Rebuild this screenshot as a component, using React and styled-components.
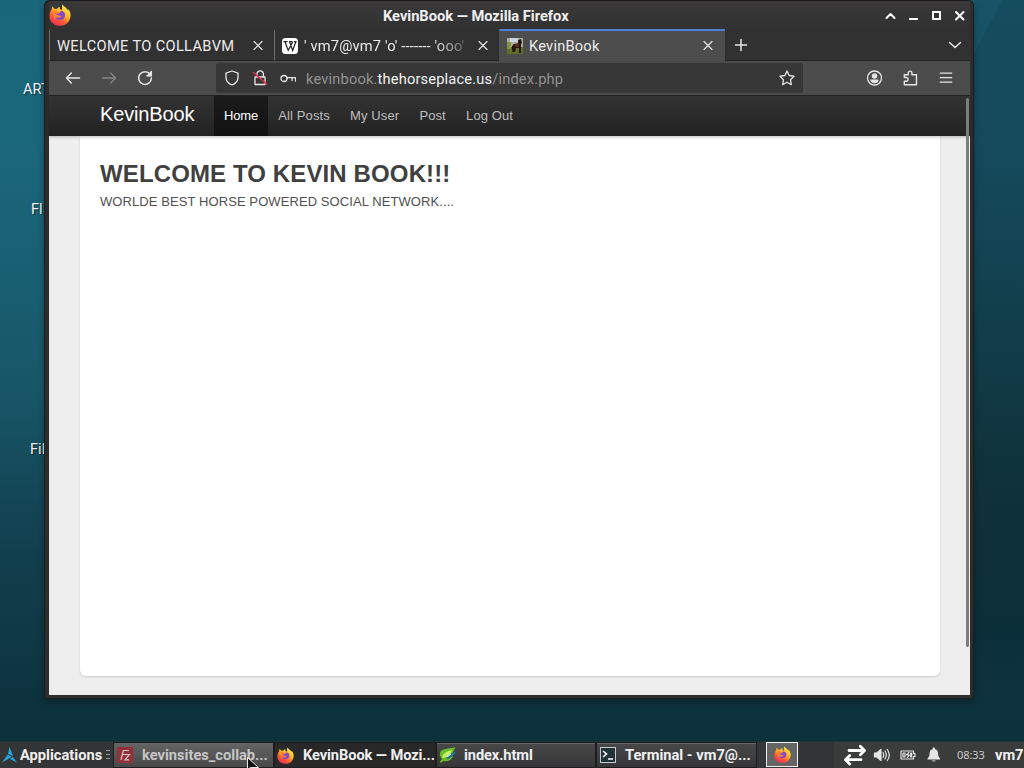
import React from 'react';
import styled, { createGlobalStyle } from 'styled-components';

const GlobalStyle = createGlobalStyle`
  * { box-sizing: border-box; }
  body { margin: 0; overflow: hidden; }
  svg { display: block; flex: none; }
  h1, p { margin: 0; }
`;

const Desktop = styled.div`
  position: relative;
  width: 1024px;
  height: 768px;
  overflow: hidden;
  display: flex;
  flex-direction: column;
  justify-content: flex-end;
  font-family: Roboto, 'Liberation Sans', sans-serif;
  background: linear-gradient(180deg, #19657a 0%, #1b677c 18%, #195e71 38%, #175566 52%, #123f4e 72%, #0d333f 91%, #0a303c 100%);
`;

const DesktopLabel = styled.span`
  position: absolute;
  left: ${(p) => p.$x}px;
  top: ${(p) => p.$y}px;
  font-size: 14.67px;
  line-height: 18px;
  color: #eef4f5;
  white-space: nowrap;
  text-shadow: 1px 1px 1px rgba(0, 0, 0, 0.6);
`;

const LightRay = styled.svg`
  position: absolute;
  right: 0;
  top: 0;
`;

const BrowserWindow = styled.section`
  position: absolute;
  left: 44px;
  top: 0;
  width: 930px;
  height: 699px;
  padding: 1px 4px 4px 5px;
  display: flex;
  flex-direction: column;
  border-radius: 6px 6px 2px 2px;
  background: #2d2d2e;
  box-shadow: inset 0 0 0 1px #1b1c1d, 0 3px 7px rgba(0, 0, 0, 0.3);
`;

const TitleBar = styled.header`
  height: 28px;
  flex: none;
  display: flex;
  align-items: center;
  justify-content: space-between;
  background: linear-gradient(#3a3838, #313131);
`;

const WindowTitle = styled.div`
  flex: 1;
  margin-left: 312px;
  padding-top: 2px;
  font-size: 14.67px;
  font-weight: 700;
  letter-spacing: -0.02px;
  color: #f0f0f0;
  white-space: nowrap;
`;

const WindowButtons = styled.div`
  display: flex;
  margin-right: -1px;
  padding-top: 2px;
`;

const TabStrip = styled.div`
  height: 32px;
  flex: none;
  display: flex;
  background: #313131;
`;

const Tab = styled.div`
  width: ${(p) => p.$w}px;
  display: flex;
  align-items: center;
  padding: 0 ${(p) => (p.$active ? 9 : 8)}px 0 7px;
  border-left: 1px solid ${(p) => (p.$active ? '#4d4d4d' : '#6b6b6b')};
  border-top: 2px solid ${(p) => (p.$active ? '#4f7fd6' : 'transparent')};
  border-bottom: ${(p) => (p.$active ? '0' : '1px solid #222')};
  background: ${(p) => (p.$active ? '#4d4d4d' : '#313131')};
  color: #ececec;
`;

const TabTitle = styled.span`
  flex: 1;
  margin-left: ${(p) => p.$gap || 0}px;
  font-size: 14.67px;
  letter-spacing: ${(p) => p.$ls || 0}px;
  line-height: 20px;
  white-space: nowrap;
  overflow: hidden;
  ${(p) => p.$fade && 'mask-image: linear-gradient(90deg, #000 80%, rgba(0,0,0,.25) 100%); margin-right: 10px;'}
`;

const TabStripTail = styled.div`
  flex: 1;
  display: flex;
  align-items: center;
  justify-content: space-between;
  padding: 1px 7px 0 8px;
  border-bottom: 1px solid #222;
`;

const Toolbar = styled.div`
  height: 35px;
  flex: none;
  display: flex;
  align-items: center;
  background: #4c4c4c;
  border-bottom: 1px solid #222;
`;

const NavButtons = styled.div`
  display: flex;
  gap: 20px;
  width: 167px;
  padding-left: 16px;
`;

const UrlBar = styled.div`
  width: 587px;
  height: 30px;
  display: flex;
  align-items: center;
  padding: 0 8px;
  background: #373737;
  border-radius: 2px;
`;

const UrlIcons = styled.div`
  display: flex;
  gap: 12px;
`;

const Url = styled.div`
  flex: 1;
  margin-left: 10px;
  padding-top: 1px;
  font-size: 14.67px;
  letter-spacing: 0.16px;
  color: #929292;
  white-space: nowrap;
  b { font-weight: 400; color: #f3f3f3; }
`;

const ToolbarActions = styled.div`
  flex: 1;
  display: flex;
  justify-content: flex-end;
  gap: 20px;
  padding-right: 16px;
`;

const Page = styled.main`
  position: relative;
  flex: 1;
  display: flex;
  flex-direction: column;
  background: #eee;
  font-family: 'Liberation Sans', Arial, sans-serif;
`;

const SiteNav = styled.nav`
  position: relative;
  z-index: 1;
  height: 40px;
  display: flex;
  flex: none;
  padding-left: 51px;
  background: linear-gradient(#333, #222);
  box-shadow: 0 1px 3px rgba(0, 0, 0, 0.25);
`;

const Brand = styled.div`
  width: 114px;
  padding-top: 7px;
  font-size: 20px;
  line-height: 23px;
  letter-spacing: -0.15px;
  color: #fff;
`;

const NavLink = styled.div`
  padding: 10px 10px 11px;
  font-size: 13px;
  line-height: 19px;
  letter-spacing: ${(p) => (p.$active ? -0.15 : 0.1)}px;
  color: ${(p) => (p.$active ? '#fff' : '#bfbfbf')};
  background: ${(p) => (p.$active ? 'linear-gradient(#1b1b1b, #111)' : 'none')};
`;

const Links = styled.div`
  display: flex;
  gap: ${(p) => p.$gap || 0}px;
`;

const Content = styled.div`
  width: 860px;
  height: 540px;
  margin-left: 31px;
  padding: 20px;
  background: #fff;
  border-radius: 0 0 6px 6px;
  box-shadow: 0 1px 2px rgba(0, 0, 0, 0.15);
`;

const Heading = styled.h1`
  font-size: 24px;
  line-height: 36px;
  letter-spacing: 0.12px;
  color: #404040;
`;

const Tagline = styled.p`
  font-size: 13px;
  line-height: 18px;
  padding-top: 1px;
  letter-spacing: 0.085px;
  color: #505050;
`;

const ScrollThumb = styled.div`
  position: absolute;
  z-index: 2;
  right: 1px;
  top: 2px;
  width: 3px;
  height: 549px;
  border-radius: 2px;
  background: #7d7d7d;
`;

const Panel = styled.footer`
  height: 27px;
  display: flex;
  align-items: stretch;
  background: #343536;
  border-top: 1px solid #292d2f;
  color: #f0f0f0;
  font-size: 14.67px;
  font-weight: 700;
`;

const AppsMenu = styled.div`
  width: 113px;
  display: flex;
  align-items: center;
  padding-left: 2px;
  gap: 3px;
  white-space: nowrap;
`;

const Grip = styled.i`
  width: 4px;
  height: 10px;
  margin-left: 1px;
  background: repeating-linear-gradient(#9a9a9a 0 1px, transparent 1px 4px);
`;

const Task = styled.div`
  width: ${(p) => p.$w}px;
  display: flex;
  align-items: center;
  gap: ${(p) => p.$gap || 8}px;
  padding-left: ${(p) => p.$pad ?? 3}px;
  border: 1px solid #1d1d1e;
  color: ${(p) => (p.$dim ? '#c6c6c6' : '#f0f0f0')};
  background: ${(p) => (p.$active ? '#282829' : p.$dim ? 'linear-gradient(#646464, #484848)' : 'linear-gradient(#484848, #363638)')};
  box-shadow: ${(p) => (p.$active ? 'none' : 'inset 0 1px 0 #666')};
  white-space: nowrap;
  letter-spacing: ${(p) => p.$ls || 0}px;
  overflow: hidden;
`;

const Launcher = styled.div`
  width: 32px;
  margin: 0 36px 1px 9px;
  display: flex;
  align-items: center;
  justify-content: center;
  border: 1px solid #f2f2f2;
  background: #656565;
`;

const Tray = styled.div`
  flex: 1;
  display: flex;
  align-items: center;
  padding-left: 9px;
  background: #3a3b3b;
  overflow: hidden;
`;

const TrayIcons = styled.div`
  display: flex;
  align-items: center;
  gap: 9px;
  margin-left: 6px;
`;

const Clock = styled.span`
  width: 28px;
  margin: 0 10px 0 16px;
  font: 400 11px/14px 'Noto Sans', 'Open Sans', sans-serif;
  letter-spacing: -0.1px;
  color: #ccc;
`;

const UserName = styled.span`
  white-space: nowrap;
`;

const Pointer = styled.svg`
  position: absolute;
  left: 247px;
  top: 757px;
`;

const FirefoxIcon = ({ size = 20, id }) => (
  <svg width={size} height={size} viewBox="0 0 22 22">
    <defs>
      <linearGradient id={id} x1="0.8" y1="0" x2="0.2" y2="1">
        <stop offset="0" stopColor="#fff04a" />
        <stop offset="0.4" stopColor="#ffb52b" />
        <stop offset="0.7" stopColor="#ff5534" />
        <stop offset="1" stopColor="#ee2866" />
      </linearGradient>
    </defs>
    <path fill={`url(#${id})`} d="M3.2 2.2 5.8 5 8 4.8C9 3.7 9.7 3 10.7 2.7L11 5.1 13 6C13.4 3.4 12.6 2 13.4.5 15 2.9 18.2 3.7 18.6 6.3L19.3 5.2C21.1 7.4 22 10 21.5 12.5 20.7 18.4 16.7 21.7 11.3 21.8 5 21.8.5 17.6.5 11.9.5 9.1 1.4 7.1 2.7 5.4Z" />
    <path fill="#fa8433" d="M4.5 7.4 7.4 6.5 11.3 9.3 8.9 10.5 7.5 12.7 11.2 15.6 6.8 15.8C4.7 14.1 3.5 11.2 4.5 7.4Z" />
    <path fill="#8548c6" d="M11.1 7.1C14.7 6.4 16.8 9.3 15.9 12.4 15.2 15.7 10.8 17 7.6 15.2 6.6 14.6 6.5 13.7 6.6 12.9 8.2 14.4 11.9 14.1 12.5 12.1 9.7 12.1 8.8 10.6 6.9 10.5 8 9 11.8 10.2 11.1 7.1Z" />
  </svg>
);

const Glyph = ({ w = 16, h = 16, color = '#e5e5e5', stroke = 1.3, children, ...rest }) => (
  <svg width={w} height={h} viewBox={`0 0 ${w} ${h}`} fill="none" stroke={color} strokeWidth={stroke} strokeLinecap="round" strokeLinejoin="round" {...rest}>
    {children}
  </svg>
);

const CloseIcon = () => <Glyph stroke={1.15}><path d="m4 3.5 8 8m0-8-8 8" /></Glyph>;

const WikiIcon = () => (
  <svg width="16" height="16" viewBox="0 0 16 16">
    <rect width="16" height="16" rx="3.5" fill="#fff" />
    <path d="M1.5 3.7h4M7 3.7h3.3M12 3.7h2.6M3 3.7l3.2 8.7L10.8 3.7M7.5 3.7l3.2 8.7 3.1-8.7" fill="none" stroke="#222" strokeWidth="1.2" />
  </svg>
);

const HorseIcon = () => (
  <svg width="16" height="16" viewBox="0 0 16 16">
    <path fill="#a9aea0" d="M0 0h16v16H0z" />
    <path fill="#5f6f25" d="M0 9h16v7H0z" />
    <path fill="#819143" d="M0 4h4v7H0z" />
    <path fill="#cbd3e0" d="M3 0h8v4H3z" />
    <path fill="#251611" d="m11 2 3-1 1 4-1 1v9h-2v-5H9l-1 4H5l1-3-1 2V8l2-2 4-.4z" />
    <path fill="#582b1b" d="m8 6 4-1v4H8z" />
  </svg>
);

export default function App() {
  return (
    <>
      <GlobalStyle />
      <Desktop>
        <LightRay width="56" height="742" viewBox="0 0 56 742">
          <defs>
            <linearGradient id="wall" x1="0" y1="0" x2="0" y2="1">
              <stop offset="0" stopColor="#175468" />
              <stop offset="0.2" stopColor="#164e60" />
              <stop offset="0.42" stopColor="#123f4c" />
              <stop offset="0.68" stopColor="#0e3039" />
              <stop offset="0.86" stopColor="#0b2f3a" />
              <stop offset="0.96" stopColor="#0b2f3a" stopOpacity="0" />
            </linearGradient>
            <linearGradient id="shade" x1="0" y1="0" x2="0" y2="1">
              <stop offset="0" stopColor="#0b3441" stopOpacity="0.25" />
              <stop offset="0.3" stopColor="#0b3441" stopOpacity="0.2" />
              <stop offset="1" stopColor="#0b3441" stopOpacity="0" />
            </linearGradient>
          </defs>
          <path d="M0 0h56v742H0Z" fill="url(#wall)" />
          <path d="M34 0h22v300H0V65Z" fill="url(#shade)" />
        </LightRay>
        <DesktopLabel $x={23} $y={80}>ART</DesktopLabel>
        <DesktopLabel $x={31} $y={200}>Fl</DesktopLabel>
        <DesktopLabel $x={30} $y={440}>Fil</DesktopLabel>

        <BrowserWindow>
          <TitleBar>
            <FirefoxIcon size={22} id="fx-title" />
            <WindowTitle>KevinBook — Mozilla Firefox</WindowTitle>
            <WindowButtons>
              <Glyph w={23} color="#fff" stroke={2}><path d="m7.5 10 4-4 4 4" /></Glyph>
              <Glyph w={23} color="#fff" stroke={2} strokeLinecap="butt"><path d="M7 11h9" /></Glyph>
              <Glyph w={23} color="#fff" stroke={2} strokeLinejoin="miter"><path d="M8 4h7v7H8z" /></Glyph>
              <Glyph w={23} color="#fff" stroke={2}><path d="m8 4 7.5 7.5m0-7.5L8 11.5" /></Glyph>
            </WindowButtons>
          </TitleBar>

          <TabStrip>
            <Tab $w={225}><TabTitle $ls={0.32}>WELCOME TO COLLABVM</TabTitle><CloseIcon /></Tab>
            <Tab $w={225}><WikiIcon /><TabTitle $gap={6} $ls={0.16} $fade>' vm7@vm7 'o' ------- 'ooo'</TabTitle><CloseIcon /></Tab>
            <Tab $w={226} $active><HorseIcon /><TabTitle $gap={6} $ls={0.2}>KevinBook</TabTitle><CloseIcon /></Tab>
            <TabStripTail>
              <Glyph stroke={1.5}><path d="M2.5 8h11M8 2.5v11" /></Glyph>
              <Glyph stroke={1.5}><path d="m2.5 5.5 5.5 5 5.5-5" /></Glyph>
            </TabStripTail>
          </TabStrip>

          <Toolbar>
            <NavButtons>
              <Glyph stroke={1.5}><path d="M14.5 8h-13M6.3 3 1.5 8l4.8 5" /></Glyph>
              <Glyph stroke={1.4} color="#858585"><path d="M1.5 8h13M9.7 3l4.8 5-4.8 5" /></Glyph>
              <Glyph stroke={1.5}><path d="M13.2 4.3A6.4 6.4 0 1 0 14.4 8M14.3 1.5v4.3H10" /><path fill="#e5e5e5" d="m14.2 2-3.5 3.6h3.5z" /></Glyph>
            </NavButtons>
            <UrlBar>
              <UrlIcons>
                <Glyph><path d="M8 1 14 3.2v4.3c0 3.6-2.5 6.1-6 7.5-3.5-1.4-6-3.9-6-7.5V3.2Z" /></Glyph>
                <Glyph><path d="M5 7V4a3.2 3.2 0 0 1 6.4 0v3M3 7h10v7.5H3z" /><path d="m1.5 2.5 13 11.5" stroke="#e22850" strokeWidth="1.6" /></Glyph>
                <Glyph><circle cx="4" cy="8.5" r="3" /><path d="M7 8.5V7.7h8.5V11M12 8v2.5" /></Glyph>
              </UrlIcons>
              <Url>kevinbook.<b>thehorseplace.us</b>/index.php</Url>
              <Glyph><path d="m8 1 2.1 4.5 4.9.7-3.5 3.5.8 5L8 12.3l-4.3 2.4.8-5L1 6.2l4.9-.7Z" /></Glyph>
            </UrlBar>
            <ToolbarActions>
              <Glyph><circle cx="8.5" cy="8" r="7" /><circle cx="8.5" cy="6" r="2.1" fill="#e5e5e5" /><path fill="#e5e5e5" d="M4.9 10.1h7.2c-.5 1.6-1.8 2.6-3.6 2.6s-3.1-1-3.6-2.6Z" /></Glyph>
              <Glyph stroke={1.4}><path d="M2.3 7.5V4.8h4V2.9a1.8 1.8 0 0 1 3.6 0v1.9h4.6v10H2.3v-3.6h1.9a1.8 1.8 0 0 0 0-3.7Z" /></Glyph>
              <Glyph><path d="M2.3 3.2h11.4M2.3 7.7h11.4M2.3 12.2h11.4" /></Glyph>
            </ToolbarActions>
          </Toolbar>

          <Page>
            <SiteNav>
              <Brand>KevinBook</Brand>
              <Links $gap={0.25}>
                <NavLink $active>Home</NavLink>
                <NavLink>All Posts</NavLink>
                <NavLink>My User</NavLink>
                <NavLink>Post</NavLink>
                <NavLink>Log Out</NavLink>
              </Links>
            </SiteNav>
            <Content>
              <Heading>WELCOME TO KEVIN BOOK!!!</Heading>
              <Tagline>WORLDE BEST HORSE POWERED SOCIAL NETWORK....</Tagline>
            </Content>
            <ScrollThumb />
          </Page>
        </BrowserWindow>

        <Panel>
          <AppsMenu>
            <svg width="15" height="16" viewBox="0 0 15 16"><path fill="#25a9e0" d="m7.5 0 3.6 9-5-2zM5.6 7.8l4.4 1.9L0 15.5zM8 12l2.9-2 4.1 5.5z" /></svg>
            <span>Applications</span><Grip />
          </AppsMenu>
          <Task $w={161} $dim $gap={9}>
            <svg width="16" height="18" viewBox="0 0 16 18"><path fill="#94303a" d="M0 1h16v16H0z" /><path d="M4 14 6.3 4.5H12M5 8.5h4M8.4 8.5h4L8 13.8h4.2" fill="none" stroke="#d0c3c5" strokeWidth="1.2" /></svg>
            kevinsites_collab...
          </Task>
          <Task $w={162} $active $pad={2} $gap={9} $ls={-0.1}><FirefoxIcon size={17} id="fx-task" />KevinBook — Mozi...</Task>
          <Task $w={160} $pad={2} $gap={8} $ls={-0.1}>
            <svg width="17" height="18" viewBox="0 0 17 18"><path fill="#67bd28" d="M16.5 1C10 3 2 2 1 7c-.3 3 .8 5 2 6L.8 16l1 .8L4.5 15C11 16.5 15 12 14 6z" /><path fill="#caed68" d="M3 11c2-5 7-6 10-7-1 3-3 7-9 8z" /><path stroke="#226f91" strokeWidth="2.6" d="m16 6.5-8 6" /><path stroke="#e8f2f5" d="m8 11 4-3" /></svg>
            index.html
          </Task>
          <Task $w={161} $gap={9}>
            <svg width="16" height="16" viewBox="0 0 16 16"><rect x=".5" y=".5" width="15" height="15" fill="#213238" stroke="#c4cbcd" /><path d="m3 4 3.5 3L3 10M8 12h5" fill="none" stroke="#fff" strokeWidth="1.6" /></svg>
            Terminal - vm7@...
          </Task>
          <Launcher><FirefoxIcon size={17} id="fx-launch" /></Launcher>
          <Tray>
            <Glyph w={24} h={24} color="#fff" stroke={2.8}><path d="M6 7.5h15m-3.7-4.3L21.5 7.5l-4.2 4.3M18 16.7H3m3.7-4.3-4.2 4.3L6.7 21" /></Glyph>
            <TrayIcons>
              <Glyph w={18} stroke={1.2}><path fill="#e5e5e5" d="M1.5 6h2.3L8 2.5v11L3.8 10H1.5z" /><path d="M10 5.5q1.5 2.5 0 5M12 4q2.7 4 0 8M14.3 2.5q4 5.5 0 11" /></Glyph>
              <Glyph stroke={1.2}><path d="M1 4h12.5v2.5H15v3h-1.5V12H1zM3 6v4h2V6zM10.7 6v4h1V6zM8.8 5.5 6.5 8h3l-2 2.5" /></Glyph>
              <Glyph><path fill="#e5e5e5" stroke="none" d="M7.8 2V.5h2V2c2.5.6 3.3 2.5 3.3 5 0 2.3.7 3.2 2 4.5v1H2.5v-1c1.3-1.3 2-2.2 2-4.5 0-2.5.8-4.4 3.3-5ZM6.5 13.5H11q-2.2 2-4.5 0Z" /></Glyph>
            </TrayIcons>
            <Clock>08:33</Clock>
            <UserName>vm7</UserName>
          </Tray>
        </Panel>
        <Pointer width="12" height="11" viewBox="0 0 12 11"><path d="M.5.5v12l3-2 8 0Z" fill="#111" stroke="#e8e8e8" /></Pointer>
      </Desktop>
    </>
  );
}
